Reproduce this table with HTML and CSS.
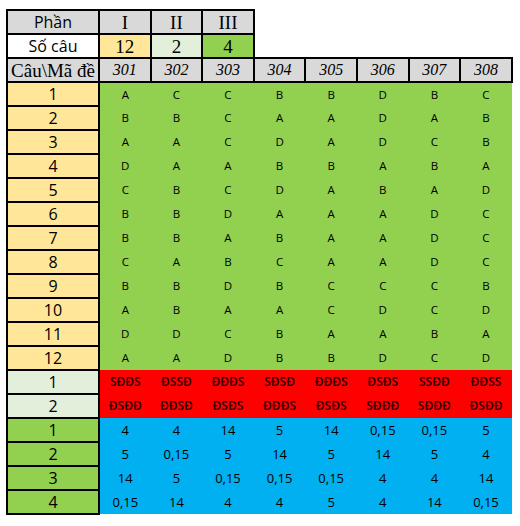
FILE: index.html
```html
<!DOCTYPE html>
<html>
<head>
<meta charset="utf-8">
<link rel="stylesheet" href="styles.css">
</head>
<body>
<table class="sheet">
  <colgroup>
    <col class="c-first">
    <col class="c"><col class="c"><col class="c"><col class="c">
    <col class="c"><col class="c"><col class="c"><col class="c">
  </colgroup>
  <tr>
    <td class="lab gray">Phần</td>
    <td class="hd serif gray">I</td>
    <td class="hd serif gray">II</td>
    <td class="hd serif gray">III</td>
    <td class="blank" colspan="5"></td>
  </tr>
  <tr>
    <td class="lab white">Số câu</td>
    <td class="hd serif yellow">12</td>
    <td class="hd serif lgreen">2</td>
    <td class="hd serif green">4</td>
    <td class="blank" colspan="5"></td>
  </tr>
  <tr>
    <td class="lab serif gray">Câu\Mã đề</td>
    <td class="hd code gray">301</td><td class="hd code gray">302</td><td class="hd code gray">303</td><td class="hd code gray">304</td>
    <td class="hd code gray">305</td><td class="hd code gray">306</td><td class="hd code gray">307</td><td class="hd code gray">308</td>
  </tr>
  <tr class="p1"><td class="lab yellow">1</td><td>A</td><td>C</td><td>C</td><td>B</td><td>B</td><td>D</td><td>B</td><td>C</td></tr>
  <tr class="p1"><td class="lab yellow">2</td><td>B</td><td>B</td><td>C</td><td>A</td><td>A</td><td>D</td><td>A</td><td>B</td></tr>
  <tr class="p1"><td class="lab yellow">3</td><td>A</td><td>A</td><td>C</td><td>D</td><td>A</td><td>D</td><td>C</td><td>B</td></tr>
  <tr class="p1"><td class="lab yellow">4</td><td>D</td><td>A</td><td>A</td><td>B</td><td>B</td><td>A</td><td>B</td><td>A</td></tr>
  <tr class="p1"><td class="lab yellow">5</td><td>C</td><td>B</td><td>C</td><td>D</td><td>A</td><td>B</td><td>A</td><td>D</td></tr>
  <tr class="p1"><td class="lab yellow">6</td><td>B</td><td>B</td><td>D</td><td>A</td><td>A</td><td>A</td><td>D</td><td>C</td></tr>
  <tr class="p1"><td class="lab yellow">7</td><td>B</td><td>B</td><td>A</td><td>B</td><td>A</td><td>A</td><td>D</td><td>C</td></tr>
  <tr class="p1"><td class="lab yellow">8</td><td>C</td><td>A</td><td>B</td><td>C</td><td>A</td><td>A</td><td>D</td><td>C</td></tr>
  <tr class="p1"><td class="lab yellow">9</td><td>B</td><td>B</td><td>D</td><td>B</td><td>C</td><td>C</td><td>C</td><td>B</td></tr>
  <tr class="p1"><td class="lab yellow">10</td><td>A</td><td>B</td><td>A</td><td>A</td><td>C</td><td>D</td><td>C</td><td>D</td></tr>
  <tr class="p1"><td class="lab yellow">11</td><td>D</td><td>D</td><td>C</td><td>B</td><td>A</td><td>A</td><td>B</td><td>A</td></tr>
  <tr class="p1"><td class="lab yellow">12</td><td>A</td><td>A</td><td>D</td><td>B</td><td>B</td><td>D</td><td>C</td><td>D</td></tr>
  <tr class="p2"><td class="lab lgreen">1</td><td>SĐĐS</td><td>ĐSSĐ</td><td>ĐĐĐS</td><td>SĐSĐ</td><td>ĐĐĐS</td><td>ĐSĐS</td><td>SSĐĐ</td><td>ĐĐSS</td></tr>
  <tr class="p2"><td class="lab lgreen">2</td><td>ĐSĐĐ</td><td>ĐĐSĐ</td><td>ĐSĐS</td><td>ĐĐĐS</td><td>ĐSĐS</td><td>SĐĐĐ</td><td>SĐĐĐ</td><td>ĐSĐĐ</td></tr>
  <tr class="p3"><td class="lab green">1</td><td>4</td><td>4</td><td>14</td><td>5</td><td>14</td><td>0,15</td><td>0,15</td><td>5</td></tr>
  <tr class="p3"><td class="lab green">2</td><td>5</td><td>0,15</td><td>5</td><td>14</td><td>5</td><td>14</td><td>5</td><td>4</td></tr>
  <tr class="p3"><td class="lab green">3</td><td>14</td><td>5</td><td>0,15</td><td>0,15</td><td>0,15</td><td>4</td><td>4</td><td>14</td></tr>
  <tr class="p3"><td class="lab green">4</td><td>0,15</td><td>14</td><td>4</td><td>4</td><td>5</td><td>4</td><td>14</td><td>0,15</td></tr>
</table>
</body>
</html>
```
FILE: styles.css
```css
html, body {
  margin: 0;
  padding: 0;
  background: #ffffff;
}
body {
  padding: 9px 0 0 6px;
  font-family: "Open Sans", "Noto Sans", sans-serif;
  color: #000;
}
.sheet {
  border-collapse: collapse;
  table-layout: fixed;
  width: 505px;
}
.c-first { width: 92px; }
.c { width: 51.6px; }
.sheet tr { height: 24px; }
.sheet td {
  padding: 0;
  text-align: center;
  vertical-align: middle;
  line-height: 1;
  white-space: nowrap;
  overflow: hidden;
}
.lab {
  border: 2px solid #000;
  font-size: 16px;
}
.hd {
  border: 2px solid #000;
}
.serif {
  font-family: "Liberation Serif", "Times New Roman", serif;
  font-size: 19px;
}
.code {
  font-family: "Liberation Serif", "Times New Roman", serif;
  font-style: italic;
  font-size: 16px;
}
.blank { border: none; background: #fff; }
.gray { background: #d9d9d9; }
.white { background: #ffffff; }
.yellow { background: #ffe699; }
.lgreen { background: #e2efda; }
.green { background: #92d050; }
.p1 td { background: #92d050; font-size: 11.5px; }
.p2 td { background: #ff0000; font-size: 12px; font-weight: 600; color: #2a0000; }
.p3 td { background: #00b0f0; font-size: 13px; }
.p1 td.lab { background: #ffe699; font-size: 16px; }
.p2 td.lab { background: #e2efda; font-size: 16px; font-weight: 400; color: #000; }
.p3 td.lab { background: #92d050; font-size: 16px; }
```
